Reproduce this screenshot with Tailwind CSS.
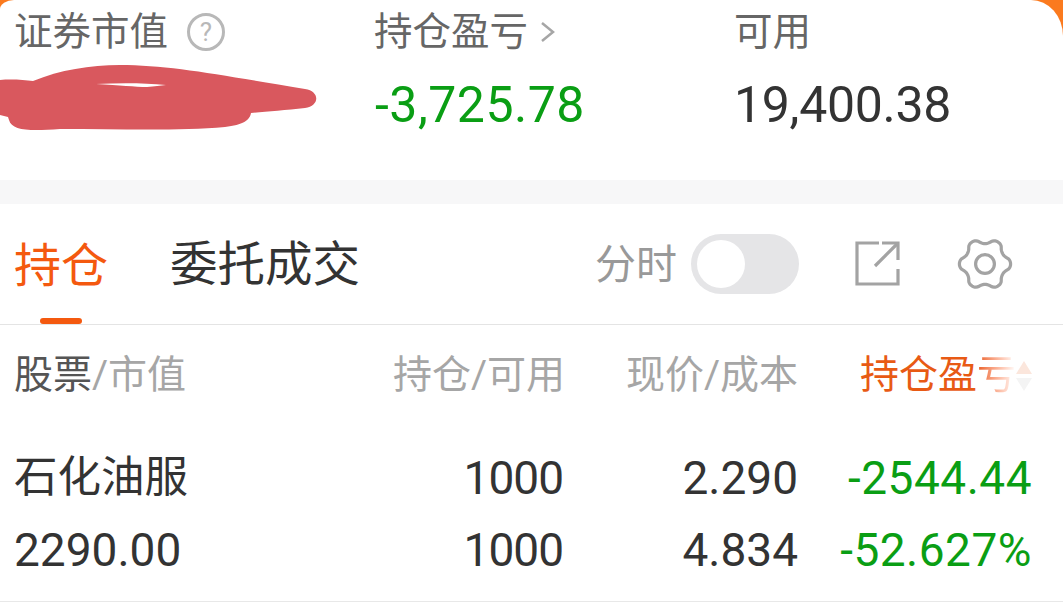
<!DOCTYPE html>
<html lang="zh-CN">
<head>
  <meta charset="UTF-8" />
  <title>持仓</title>
  <script src="https://cdn.jsdelivr.net/npm/@tailwindcss/browser@4"></script>
</head>
<body class="bg-[#fb7a1e] w-[1063px] h-[603px] overflow-hidden font-['Roboto','Noto_Sans_CJK_SC',sans-serif]">
  <div class="relative bg-white h-[603px] rounded-tl-[14px_9px] rounded-tr-[32px_36px]">

    <!-- Account summary -->
    <div class="relative h-[180px] grid grid-cols-[360px_360px_1fr] pl-[15px]">
      <div>
        <div class="h-[64px] -ml-[1px] flex items-center text-[38.5px] text-[#666666]">
          证券市值
          <span class="ml-[19px] w-[38px] h-[38px] rounded-full border-[3px] border-[#b8b8b8] flex items-center justify-center text-[26px] text-[#b8b8b8]">?</span>
        </div>
      </div>
      <div>
        <div class="h-[64px] -ml-[1px] flex items-center text-[38.5px] text-[#666666]">
          持仓盈亏
          <svg class="ml-[12px]" width="16" height="22" viewBox="0 0 16 22" fill="none" stroke="#a6a6a6" stroke-width="2.5"><path d="M2 2l11 9-11 9" /></svg>
        </div>
        <div class="h-[82px] flex items-center text-[50px] tracking-[0.5px] text-[#0a9e14]">-3,725.78</div>
      </div>
      <div>
        <div class="h-[64px] -ml-[1px] flex items-center text-[38.5px] text-[#666666]">可用</div>
        <div class="h-[82px] -ml-[1px] flex items-center text-[50px] tracking-[-0.3px] text-[#333333]">19,400.38</div>
      </div>
      <!-- Red scribble over the hidden amount -->
      <svg class="absolute left-0 top-[60px]" width="320" height="75" viewBox="0 0 320 75">
        <path fill="#d9585e" fill-rule="evenodd" d="M0 20C12 19 24 20 33 21C60 10 90 5 120 5C170 5 220 15 305 29C320 31 320 46 305 48C285 50 265 52 251 53C250 60 243 65 225 67C180 71 120 69 60 69C30 71 12 71 9 60L8 57L0 55ZM96 24C120 25 135 27 147 27C155 26 160 26 166 25C145 23 120 23 96 24Z" />
      </svg>
    </div>

    <div class="h-[24px] bg-[#f7f7f8]"></div>

    <!-- Tabs -->
    <div class="relative h-[121px] border-b border-[#e4e4e4] pl-[15px] flex items-center">
      <span class="-ml-[1px] pt-[4px] text-[47px] text-[#f4590f]">持仓</span>
      <span class="ml-[62px] pt-[4px] text-[47.5px] text-[#333333]">委托成交</span>
      <span class="ml-auto pt-[4px] text-[41px] text-[#999999]">分时</span>
      <div class="ml-[14px] w-[108px] h-[60px] rounded-full bg-[#e5e5e7] flex items-center pl-[6px]">
        <div class="w-[48px] h-[48px] rounded-full bg-white"></div>
      </div>
      <svg class="ml-[55px]" width="48" height="48" viewBox="0 0 48 48" fill="none" stroke="#a3a3a3" stroke-width="3.2">
        <path d="M25 3H3V44H44V29" />
        <path d="M21 26L43 4" />
        <path d="M28 3H44V20" />
      </svg>
      <svg class="ml-[53px] mr-[48px]" width="60" height="60" viewBox="0 0 60 60" fill="none" stroke="#a3a3a3" stroke-width="3.2">
        <path id="gear" />
        <circle cx="30" cy="30" r="9.4" />
      </svg>
      <div class="absolute left-[40px] bottom-0 w-[42px] h-[6px] rounded-full bg-[#f4590f]"></div>
    </div>

    <!-- Holdings table -->
    <div class="h-[277px] border-b border-[#e8e8e8] pl-[14px] pr-[31px] text-right">
      <div class="h-[117px] grid grid-cols-[1fr_235px_234px] pb-[16px] items-center text-[39px] text-[#a6a6a6]">
        <div class="grid grid-cols-[1fr_auto] items-center">
          <div class="text-left whitespace-nowrap"><span class="text-[#555555]">股票</span>/市值</div>
          <div class="-mr-[2px] whitespace-nowrap">持仓/可用</div>
        </div>
        <div class="whitespace-nowrap">现价/成本</div>
        <div class="flex items-center justify-end whitespace-nowrap text-[#e85a14]">
          <span>持仓盈</span><span class="bg-gradient-to-r from-[#e85a14] to-[#ffffff] bg-clip-text text-transparent">亏</span>
          <div class="flex flex-col gap-[4px]">
            <div class="w-0 h-0 border-x-[8px] border-x-transparent border-b-[13px] border-b-[#fbe6dc]"></div>
            <div class="w-0 h-0 border-x-[8px] border-x-transparent border-t-[13px] border-t-[#f4f4f4]"></div>
          </div>
        </div>
      </div>
      <div class="h-[72px] grid grid-cols-[1fr_235px_234px] items-center text-[46px] text-[#333333]">
        <div class="flex justify-between items-center"><span class="text-[43.5px]">石化油服</span><span class="tracking-[-1px]">1000</span></div>
        <div>2.290</div>
        <div class="tracking-[0.5px] text-[#0a9e14]">-2544.44</div>
      </div>
      <div class="h-[72px] grid grid-cols-[1fr_235px_234px] items-center text-[46px] text-[#333333]">
        <div class="flex justify-between items-center"><span>2290.00</span><span class="tracking-[-1px]">1000</span></div>
        <div>4.834</div>
        <div class="tracking-[0.5px] text-[#0a9e14]">-52.627%</div>
      </div>
    </div>
  </div>

  <script>
    // gear outline: six flat-topped lobes with tight dips between them
    let d = '';
    for (let i = 0; i < 360; i += 3) {
      const a = i * Math.PI / 180;
      const c = Math.cos(6 * a);
      const r = 23 + 2.6 * Math.sign(c) * Math.pow(Math.abs(c), 0.7);
      d += (i ? 'L' : 'M') + (30 + r * Math.cos(a)).toFixed(2) + ' ' + (30 + r * Math.sin(a)).toFixed(2);
    }
    document.getElementById('gear').setAttribute('d', d + 'Z');
  </script>
</body>
</html>
